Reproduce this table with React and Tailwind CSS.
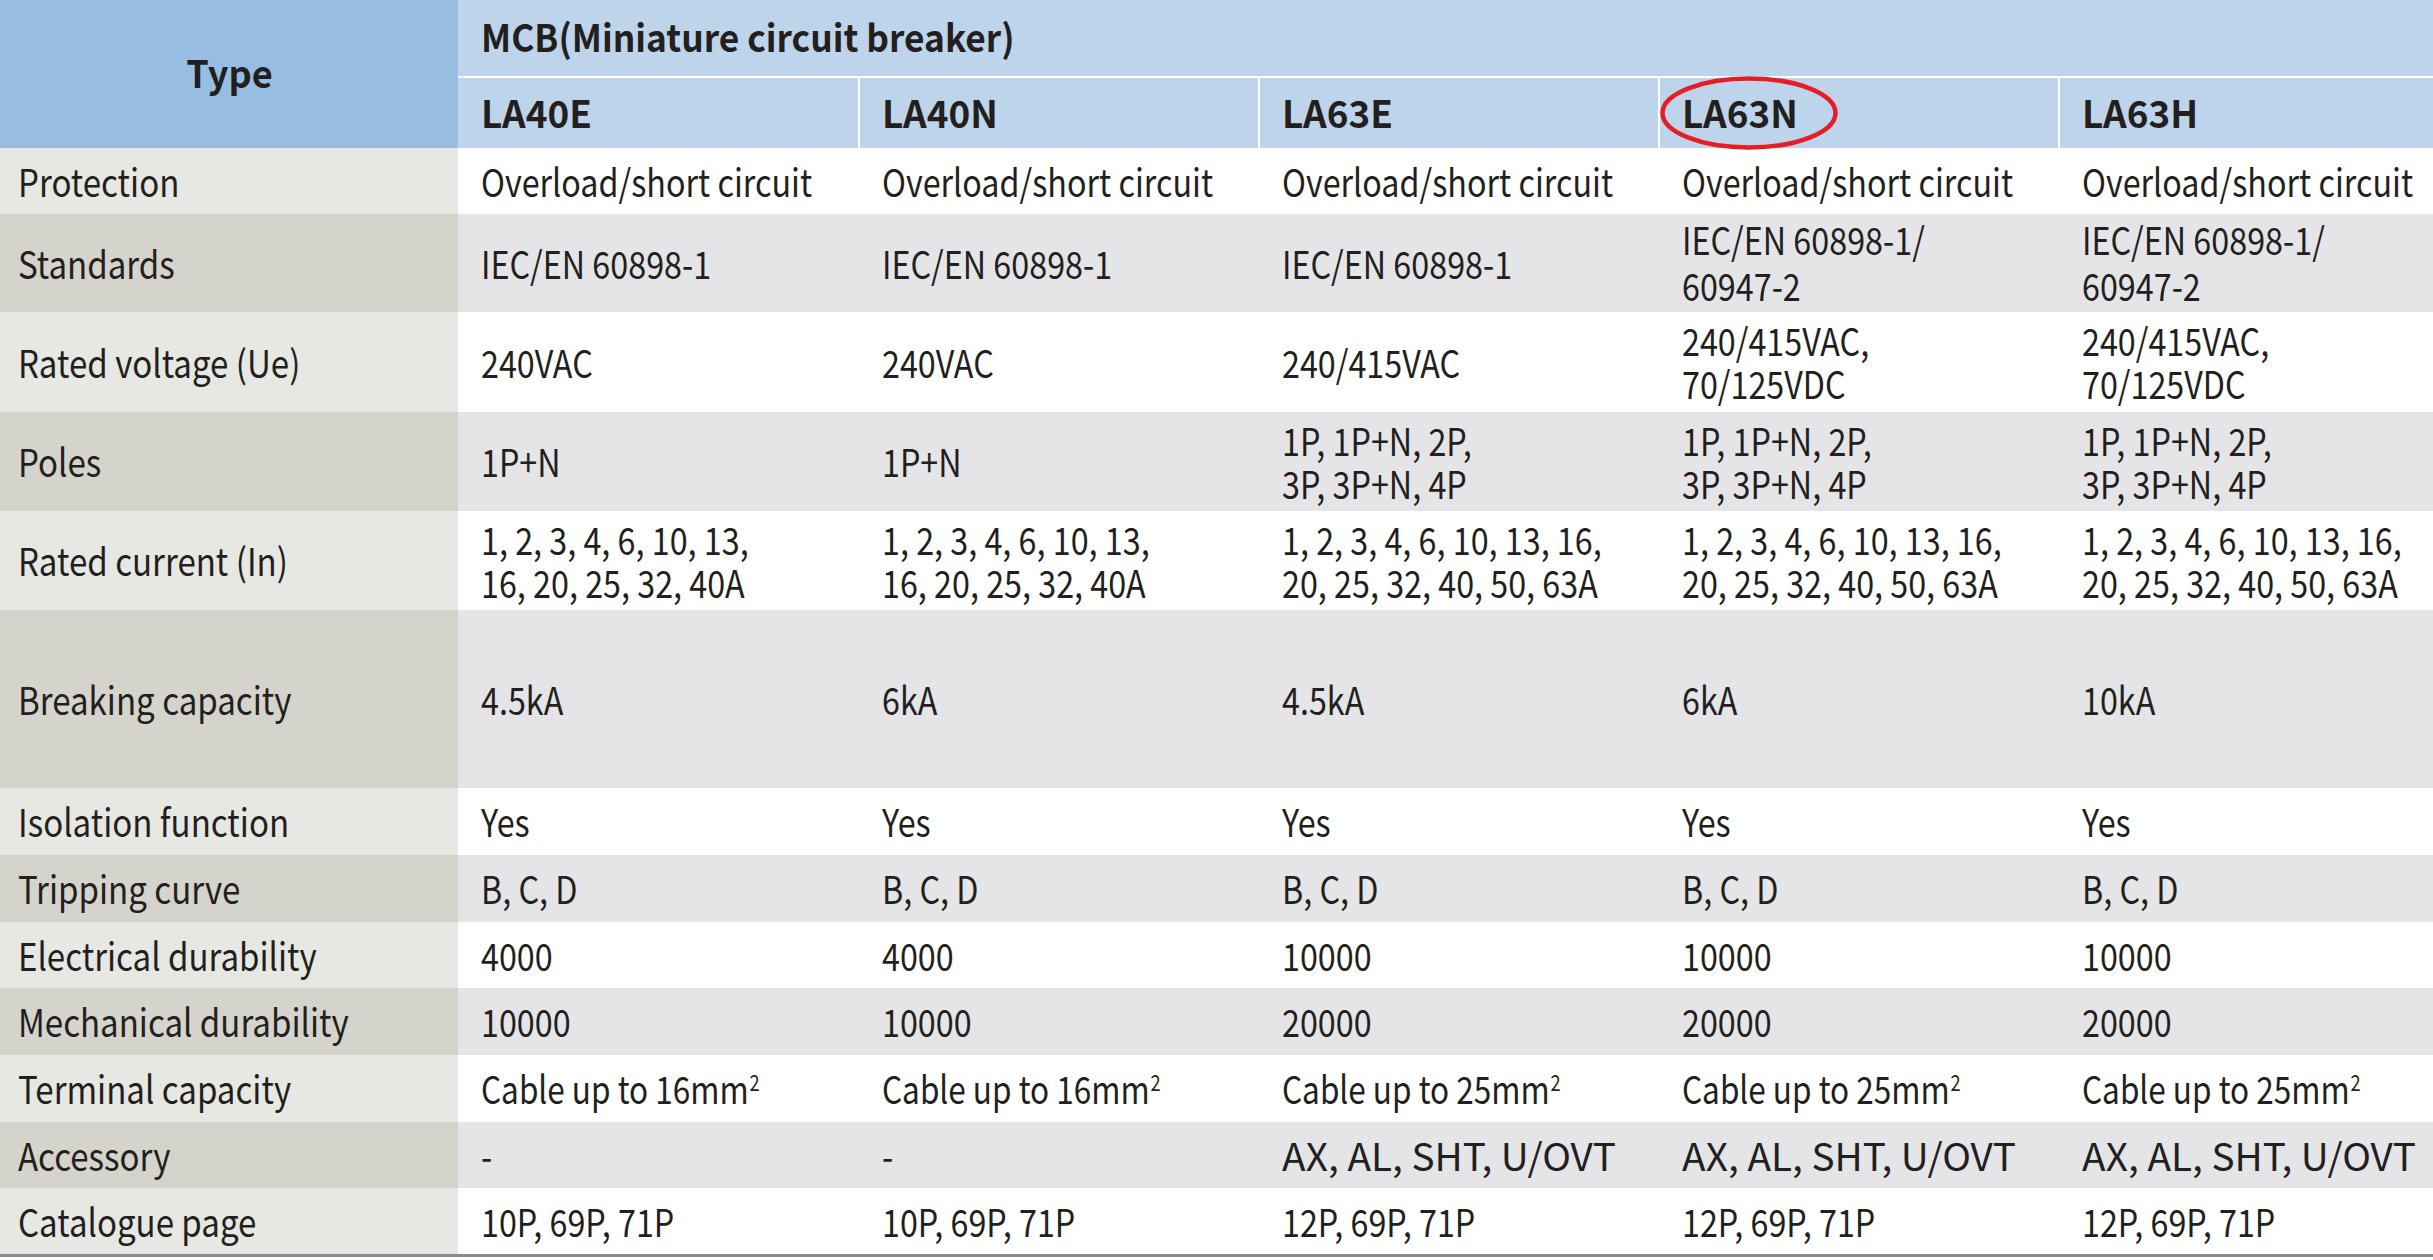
import React from "react";

const rows = [
  { label: "Protection", h: "h-[66px]", cells: Array(5).fill("Overload/short circuit") },
  {
    label: "Standards",
    h: "h-[98px]",
    lead: "leading-[46px]",
    cells: ["IEC/EN 60898-1", "IEC/EN 60898-1", "IEC/EN 60898-1", ["IEC/EN 60898-1/", "60947-2"], ["IEC/EN 60898-1/", "60947-2"]],
  },
  {
    label: "Rated voltage (Ue)",
    h: "h-[100px]",
    cells: ["240VAC", "240VAC", "240/415VAC", ["240/415VAC,", "70/125VDC"], ["240/415VAC,", "70/125VDC"]],
  },
  {
    label: "Poles",
    h: "h-[99px]",
    cells: ["1P+N", "1P+N", ["1P, 1P+N, 2P,", "3P, 3P+N, 4P"], ["1P, 1P+N, 2P,", "3P, 3P+N, 4P"], ["1P, 1P+N, 2P,", "3P, 3P+N, 4P"]],
  },
  {
    label: "Rated current (In)",
    h: "h-[99px]",
    cells: [
      ["1, 2, 3, 4, 6, 10, 13,", "16, 20, 25, 32, 40A"],
      ["1, 2, 3, 4, 6, 10, 13,", "16, 20, 25, 32, 40A"],
      ["1, 2, 3, 4, 6, 10, 13, 16,", "20, 25, 32, 40, 50, 63A"],
      ["1, 2, 3, 4, 6, 10, 13, 16,", "20, 25, 32, 40, 50, 63A"],
      ["1, 2, 3, 4, 6, 10, 13, 16,", "20, 25, 32, 40, 50, 63A"],
    ],
  },
  { label: "Breaking capacity", h: "h-[178px]", cells: ["4.5kA", "6kA", "4.5kA", "6kA", "10kA"] },
  { label: "Isolation function", h: "h-[67px]", cells: Array(5).fill("Yes") },
  { label: "Tripping curve", h: "h-[67px]", cells: Array(5).fill("B, C, D") },
  { label: "Electrical durability", h: "h-[66px]", cells: ["4000", "4000", "10000", "10000", "10000"] },
  { label: "Mechanical durability", h: "h-[67px]", cells: ["10000", "10000", "20000", "20000", "20000"] },
  { label: "Terminal capacity", h: "h-[67px]", cells: ["mm16", "mm16", "mm25", "mm25", "mm25"] },
  { label: "Accessory", h: "h-[66px]", cells: ["-", "-", "AX, AL, SHT, U/OVT", "AX, AL, SHT, U/OVT", "AX, AL, SHT, U/OVT"] },
  { label: "Catalogue page", h: "h-[66px]", cells: ["10P, 69P, 71P", "10P, 69P, 71P", "12P, 69P, 71P", "12P, 69P, 71P", "12P, 69P, 71P"] },
];

function CellText({ v, lead }) {
  if (Array.isArray(v)) {
    return (
      <div className={`inline-block origin-left scale-x-[0.85] ${lead || "leading-[43px]"}`}>
        <div>{v[0]}</div>
        <div>{v[1]}</div>
      </div>
    );
  }
  if (v.startsWith("mm")) {
    const n = v.slice(2);
    return (
      <span className="inline-block origin-left scale-x-[0.83]">
        Cable up to {n}mm<span className="text-[22px] align-top relative top-[6px] ml-[1px]">2</span>
      </span>
    );
  }
  if (v.startsWith("AX")) {
    return <span className="inline-block origin-left scale-x-[1.02]">{v}</span>;
  }
  return <span className="inline-block origin-left scale-x-[0.85]">{v}</span>;
}

export default function App() {
  const models = ["LA40E", "LA40N", "LA63E", "LA63N", "LA63H"];
  return (
    <div className="w-[2433px] h-[1260px] overflow-hidden bg-white font-['Noto_Sans_CJK_SC','Noto_Sans',sans-serif] text-[#231f20] text-[38px]">
      <div className="grid grid-cols-[458px_400px_400px_400px_400px_375px]">
        {/* header */}
        <div className="row-span-2 bg-[#97bde0] flex items-center justify-center font-bold pb-[6px]">
          <span className="inline-block scale-x-[0.95]">Type</span>
        </div>
        <div className="col-span-5 h-[78px] bg-[#bdd4ea] border-b-2 border-white flex items-center pl-[23px] pb-[6px] font-bold">
          <span className="inline-block origin-left scale-x-[0.93]">MCB(Miniature circuit breaker)</span>
        </div>
        {models.map((m, i) => (
          <div
            key={m}
            className={`h-[70px] bg-[#bdd4ea] flex items-center font-bold relative pb-[4px] ${i === 0 ? "pl-[23px]" : "pl-[22px] border-l-2 border-white"}`}
          >
            <span className="inline-block origin-left scale-x-[0.97]">{m}</span>
            {i === 3 && (
              <svg className="absolute left-0 -top-[2px] w-[178px] h-[74px]" viewBox="0 0 178 74" fill="none">
                <ellipse cx="89" cy="37" rx="86.5" ry="34.5" stroke="#e41e26" strokeWidth="4.5" />
              </svg>
            )}
          </div>
        ))}
        {/* body */}
        {rows.map((r, ri) => {
          const even = ri % 2 === 1;
          return (
            <React.Fragment key={r.label}>
              <div className={`${r.h} flex items-center pl-[18px] pb-[2px] whitespace-nowrap ${even ? "bg-[#d4d4cc]" : "bg-[#e7e8e3]"}`}>
                <span className="inline-block origin-left scale-x-[0.87]">{r.label}</span>
              </div>
              {r.cells.map((c, ci) => (
                <div
                  key={ci}
                  className={`${r.h} flex items-center whitespace-nowrap pb-[2px] ${ci === 0 ? "pl-[23px]" : "pl-[24px]"} ${even ? "bg-[#e5e5e8]" : "bg-white"}`}
                >
                  <CellText v={c} lead={r.lead} />
                </div>
              ))}
            </React.Fragment>
          );
        })}
      </div>
      <div className="h-[3px] bg-[#8c8c8c]" />
    </div>
  );
}
